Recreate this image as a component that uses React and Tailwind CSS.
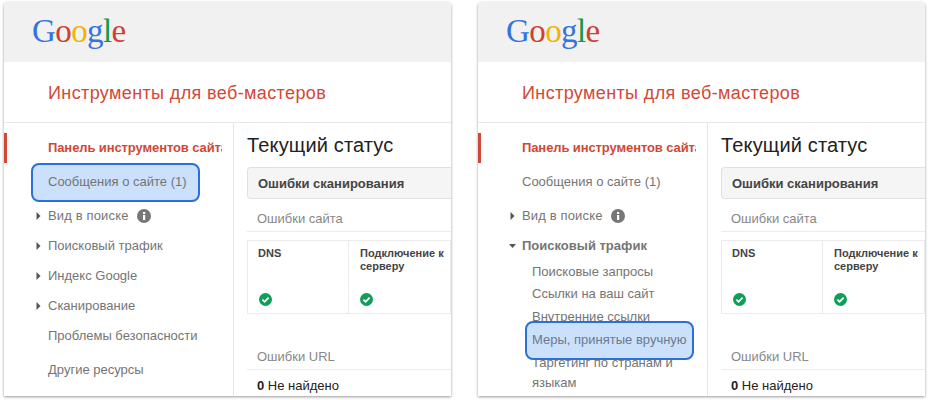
const arial = { fontFamily: '"Liberation Sans", Arial, sans-serif' };

function Arrow({ open }) {
  return (
    <svg width="7" height="9" viewBox="0 0 7 9" className="absolute left-[31px] top-1/2 -translate-y-1/2">
      {open ? <path d="M0 2.5h7L3.5 6.5z" fill="#555" /> : <path d="M1.5 0.5v8L5.5 4.5z" fill="#555" />}
    </svg>
  );
}

function Check() {
  return (
    <svg width="13" height="13" viewBox="0 0 13 13">
      <circle cx="6.5" cy="6.5" r="6.5" fill="#0f9d58" />
      <path d="M3.4 6.6l2.2 2.2 4-4.2" fill="none" stroke="#fff" strokeWidth="1.8" />
    </svg>
  );
}

function Info() {
  return (
    <svg width="14" height="14" viewBox="0 0 14 14" className="ml-2">
      <circle cx="7" cy="7" r="7" fill="#777" />
      <rect x="6" y="6" width="2.2" height="5" fill="#fff" />
      <rect x="6" y="3" width="2.2" height="2" fill="#fff" />
    </svg>
  );
}

function Highlight({ className }) {
  return <div className={"absolute rounded-lg border-2 border-[#2a70d8] bg-[#cbe0fb] " + className} />;
}

function NavRow({ children, className = "", arrow, open, mt = "" }) {
  return (
    <div className={"relative flex h-[30px] items-center pl-[44px] text-[13px] whitespace-nowrap text-[#757575] " + mt + " " + className}>
      {arrow && <Arrow open={open} />}
      {children}
    </div>
  );
}

function SubRow({ children, hl, className = "" }) {
  return (
    <div className={"relative flex h-[23px] items-center pl-[54px] text-[13px] whitespace-nowrap " + (hl ? "z-10 text-[#6d7a8c]" : "text-[#757575]") + " " + className}>
      {hl && <Highlight className="left-[47px] top-[-7px] h-[39px] w-[169px] -z-10" />}
      {children}
    </div>
  );
}

function Panel({ variant }) {
  const first = variant === 1;
  return (
    <div style={arial} className="relative h-[394px] w-[447px] overflow-hidden rounded-t-sm bg-white shadow-[0_1px_3px_rgba(0,0,0,0.4)]">
      <div className="flex h-[60px] items-start bg-[#f1f1f1] pl-[28px] pt-[7px]">
        <div style={{ fontFamily: '"Liberation Serif", serif' }} className="text-[33px] leading-[44px] tracking-[-0.6px]">
          <span className="text-[#3574e0]">G</span>
          <span className="text-[#d0402f]">o</span>
          <span className="text-[#f0b400]">o</span>
          <span className="text-[#3574e0]">g</span>
          <span className="text-[#139a48]">l</span>
          <span className="text-[#d0402f]">e</span>
        </div>
      </div>
      <div className="flex h-[61px] items-center border-b border-[#e8e8e8] pl-[44px] pt-[2px] text-[18px] tracking-[0.38px] text-[#d14836]">
        Инструменты для веб-мастеров
      </div>
      <div className="flex">
        <div className="h-[280px] w-[230px] shrink-0 overflow-hidden border-r border-[#e5e5e5] pt-[10px]">
          <div className="relative flex h-[30px] items-center overflow-hidden border-l-[3px] border-[#d14836] pl-[41px] text-[13px] font-bold tracking-[-0.1px] whitespace-nowrap text-[#d14836]">
            <span className="w-[174px] shrink-0 overflow-hidden">Панель инструментов сайта</span>
          </div>
          <NavRow mt="mt-[4px]" className={first ? "z-10 text-[#6d7a8c]" : ""}>
            {first && <Highlight className="left-[27px] top-[-4px] h-[39px] w-[169px] -z-10" />}
            Сообщения о сайте (1)
          </NavRow>
          <NavRow mt="mt-[4px]" arrow className="tracking-[0.15px]">Вид в поиске<Info /></NavRow>
          {first ? (
            <>
              <NavRow arrow>Поисковый трафик</NavRow>
              <NavRow arrow>Индекс Google</NavRow>
              <NavRow arrow>Сканирование</NavRow>
              <NavRow>Проблемы безопасности</NavRow>
              <NavRow mt="mt-[4px]">Другие ресурсы</NavRow>
            </>
          ) : (
            <>
              <NavRow arrow open className="mb-[-2px] font-bold">Поисковый трафик</NavRow>
              <SubRow className="pt-[2px]">Поисковые запросы</SubRow>
              <SubRow>Ссылки на ваш сайт</SubRow>
              <SubRow>Внутренние ссылки</SubRow>
              <SubRow hl>Меры, принятые вручную</SubRow>
              <div className="pl-[54px] pt-[2px] text-[13px] leading-[20px] text-[#757575]">Таргетинг по странам и<br />языкам</div>
            </>
          )}
        </div>
        <div className="min-w-0 flex-1 overflow-hidden pl-[13px]">
          <div className="flex h-[44px] items-center text-[20px] tracking-[0.15px] text-[#222]">Текущий статус</div>
          <div className="flex h-[32px] items-center rounded-l-sm border border-r-0 border-[#e0e0e0] bg-[#f5f5f5] pl-[10px] pt-[2px] text-[13px] font-bold text-[#444]">Ошибки сканирования</div>
          <div className="mt-[8px] flex h-[25px] items-center border-b border-[#ebebeb] pl-[10px] text-[13px] text-[#888]">Ошибки сайта</div>
          <div className="mt-[8px] flex h-[74px] border-y border-x border-[#ebebeb] text-[11px] font-bold leading-[13px] text-[#444]">
            <div className="flex w-[101px] flex-col justify-between border-r border-[#ebebeb] pl-[11px] pt-[6px] pb-[7px]">
              <div className="-ml-px">DNS</div>
              <Check />
            </div>
            <div className="flex flex-1 flex-col justify-between pl-[11px] pt-[6px] pb-[7px]">
              <div>Подключение к<br />серверу</div>
              <Check />
            </div>
          </div>
          <div className="mt-[34px] flex h-[22px] items-center border-b border-[#ebebeb] pb-[4px] pl-[10px] text-[13px] text-[#888]">Ошибки URL</div>
          <div className="pl-[10px] pt-[8px] text-[13px] leading-[16px] text-[#222]"><b>0</b> Не найдено</div>
        </div>
      </div>
    </div>
  );
}

export default function App() {
  return (
    <div className="flex h-[400px] w-[930px] gap-[27px] overflow-hidden bg-white pl-[4px] pt-[2px]">
      <Panel variant={1} />
      <Panel variant={2} />
    </div>
  );
}
